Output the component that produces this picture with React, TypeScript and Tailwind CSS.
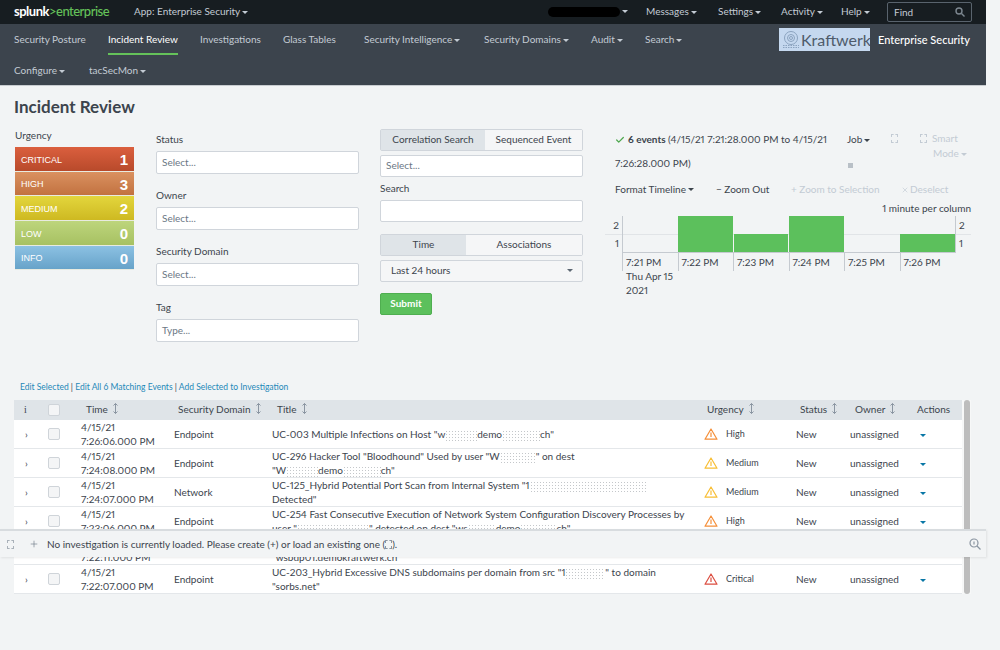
import { Check, Plus, X } from "lucide-react";

const topLinks = [
  { label: "Messages", className: "w-[72px]" },
  { label: "Settings", className: "w-[63px]" },
  { label: "Activity", className: "w-[60px]" },
  { label: "Help", className: "w-[46px]" },
];

const navLinks = [
  { label: "Security Posture", className: "w-[94px]" },
  { label: "Incident Review", className: "w-[92px]", active: true },
  { label: "Investigations", className: "w-[83px]" },
  { label: "Glass Tables", className: "w-[81px]" },
  { label: "Security Intelligence", caret: true, className: "w-[120px]" },
  { label: "Security Domains", caret: true, className: "w-[107px]" },
  { label: "Audit", caret: true, className: "w-[54px]" },
  { label: "Search", caret: true, className: "w-[60px]" },
];

const urgencies = [
  { label: "CRITICAL", count: 1, className: "bg-gradient-to-b from-[#db5f3e] to-[#b84a2b]" },
  { label: "HIGH", count: 3, className: "bg-gradient-to-b from-[#da9160] to-[#c27240]" },
  { label: "MEDIUM", count: 2, className: "bg-gradient-to-b from-[#e3d63c] to-[#ceb921]" },
  { label: "LOW", count: 0, className: "bg-gradient-to-b from-[#bdd57c] to-[#a7c162]" },
  { label: "INFO", count: 0, className: "bg-gradient-to-b from-[#8cc1e3] to-[#67a3c9]" },
];

const columns = "grid grid-cols-[26px_37px_93px_98px_432px_92px_54px_66px_50px]";

function Caret({ className = "border-t-[#c3cbd4]" }: { className?: string }) {
  return <span className={`inline-block ml-[2px] align-middle w-0 h-0 border-x-[3px] border-x-transparent border-t-[3.5px] ${className}`} />;
}

function Redacted({ className }: { className: string }) {
  return (
    <span
      className={`inline-block h-[11px] align-middle bg-[radial-gradient(#c4c7ca_0.8px,transparent_0.9px)] bg-[length:3px_3px] ${className}`}
    />
  );
}

function SortIcon() {
  return (
    <svg width="7" height="11" viewBox="0 0 7 11" className="inline-block ml-1 align-[-1px]" fill="none" stroke="#8a95a1" strokeWidth="1">
      <path d="M3.5 0.5V10.5M1.5 2.5L3.5 0.5L5.5 2.5M1.5 8.5L3.5 10.5L5.5 8.5" />
    </svg>
  );
}

function Alert({ color }: { color: string }) {
  return (
    <svg width="14" height="12" viewBox="0 0 14 12" fill="none" stroke={color} strokeWidth="1.2">
      <path d="M7 1L13 11.2H1L7 1Z" strokeLinejoin="round" />
      <path d="M7 4.5V9" />
    </svg>
  );
}

function Field({ label, placeholder }: { label: string; placeholder: string }) {
  return (
    <div className="h-[56px] pt-[4px]">
      <div className="h-[18px] leading-[12px]">{label}</div>
      <div className="h-[23px] w-[203px] bg-white border border-[#d0d5db] rounded-[2px] pl-[5px] leading-[21px] text-[#6b7785]">{placeholder}</div>
    </div>
  );
}

function Row({
  date,
  time,
  domain,
  title,
  urgency,
  color,
}: {
  date: string;
  time: string;
  domain: string;
  title: React.ReactNode;
  urgency: string;
  color: string;
}) {
  return (
    <div className={`${columns} h-[29px] pb-[1px] bg-white border-b border-[#e4e7ea] items-center leading-[14px]`}>
      <div className="pl-[11px] text-[#3c444d]">›</div>
      <div className="pl-[8px]">
        <div className="w-[12px] h-[12px] bg-[#f4f5f6] border border-[#cfd4d9] rounded-[2px]" />
      </div>
      <div className="pl-[4px]">
        <div>{date}</div>
        <div>{time}</div>
      </div>
      <div className="pl-[4px]">{domain}</div>
      <div className="pl-[4px] pr-[4px] whitespace-nowrap">{title}</div>
      <div className="pl-[4px] flex items-center">
        <Alert color={color} />
        <span className="ml-[8px] text-[9px]">{urgency}</span>
      </div>
      <div className="pl-[4px]">New</div>
      <div className="pl-[4px]">unassigned</div>
      <div className="pl-[6px]">
        <Caret className="border-t-[#0877a6]" />
      </div>
    </div>
  );
}

export default function App() {
  return (
    <div className="relative w-[1000px] h-[650px] overflow-hidden bg-[#f2f4f5] font-[Lato,sans-serif] text-[10px] proportional-nums text-[#3c444d]">
      {/* Top bar */}
      <div className="w-[986px] h-[24px] pb-[1px] bg-[#171d21] flex items-center text-[#c3cbd4]">
        <div className="ml-[14px] w-[120px] text-[13px] font-bold tracking-[-0.5px] text-white">
          splunk<span className="text-[#65c25a] font-medium">&gt;enterprise</span>
        </div>
        <div>
          App: Enterprise Security
          <Caret />
        </div>
        <div className="ml-auto flex items-center">
          <div className="w-[72px] h-[10px] bg-black rounded-full" />
          <Caret className="border-t-[#c3cbd4] mr-[18px]" />
          {topLinks.map((l) => (
            <div key={l.label} className={l.className}>
              {l.label}
              <Caret />
            </div>
          ))}
          <div className="w-[85px] h-[20px] mr-[14px] border border-[#59636d] rounded-[2px] pl-[6px] leading-[18px] flex justify-between pr-[6px]">
            Find
            <svg width="10" height="10" viewBox="0 0 10 10" fill="none" stroke="#7d8790" strokeWidth="1.4" className="mt-[4px]">
              <circle cx="4" cy="4" r="3" />
              <path d="M6.5 6.5L9.5 9.5" />
            </svg>
          </div>
        </div>
      </div>

      {/* App nav */}
      <div className="w-[986px] h-[62px] bg-[#3c444d] border-b border-[#c8ccd0] text-[#c3cbd4]">
        <div className="h-[38px] flex pl-[14px]">
          {navLinks.map((l) => (
            <div key={l.label} className={l.className}>
              <div
                className={`h-[31px] inline-block leading-[30px] border-b-2 ${
                  l.active ? "text-white border-[#65c25a]" : "border-transparent"
                }`}
              >
                {l.label}
                {l.caret && <Caret />}
              </div>
            </div>
          ))}
          <div className="ml-auto mr-[14px] flex items-start pt-[4px]">
            <div className="w-[91px] h-[23px] bg-[#c5d8ef] flex items-center overflow-hidden pl-[3px] text-[#4e5b6b] text-[16px] whitespace-nowrap">
              <svg width="18" height="19" viewBox="0 0 18 19" fill="none" stroke="#8ba3bf" strokeWidth="1" className="shrink-0">
                <circle cx="9" cy="8" r="6.5" />
                <circle cx="9" cy="8" r="3.5" />
                <circle cx="9" cy="8" r="1.5" />
                <path d="M1 15.5H17M1 17.5H17" strokeDasharray="1.5 1" />
              </svg>
              <span className="ml-[1px]">Kraftwerk</span>
            </div>
            <div className="ml-[8px] w-[94px] whitespace-nowrap h-[23px] leading-[23px] text-[11px] text-white font-medium">Enterprise Security</div>
          </div>
        </div>
        <div className="h-[23px] flex pl-[14px] leading-[16px]">
          <div className="w-[75px]">
            Configure
            <Caret />
          </div>
          <div>
            tacSecMon
            <Caret />
          </div>
        </div>
      </div>

      <h1 className="h-[43px] pl-[14px] leading-[41px] text-[17px] font-bold text-[#3c444d]">Incident Review</h1>

      {/* Filters */}
      <div className="h-[250px] flex">
        <div className="w-[156px] pl-[15px]">
          <div className="h-[18px] leading-[12px]">Urgency</div>
          <div className="w-[119px]">
            {urgencies.map((u) => (
              <div
                key={u.label}
                className={`h-[24.7px] flex items-center justify-between px-[6px] pt-[3px] border-b border-[#e8ebe0] ${u.className} text-white`}
              >
                <span className="font-['Liberation_Sans',sans-serif] text-[9px]">{u.label}</span>
                <span className="font-['Liberation_Sans',sans-serif] text-[15px] font-bold">{u.count}</span>
              </div>
            ))}
          </div>
        </div>

        <div className="w-[224px]">
          <Field label="Status" placeholder="Select..." />
          <Field label="Owner" placeholder="Select..." />
          <Field label="Security Domain" placeholder="Select..." />
          <Field label="Tag" placeholder="Type..." />
        </div>

        <div className="w-[235px]">
          <div className="w-[203px] h-[22px] flex border border-[#d0d5db] rounded-[2px] leading-[18px] text-center">
            <div className="w-[104px] bg-[#dfe4e8]">Correlation Search</div>
            <div className="flex-1 bg-[#f5f6f7]">Sequenced Event</div>
          </div>
          <div className="mt-[4px] w-[203px] h-[22px] bg-white border border-[#d0d5db] rounded-[2px] pl-[5px] leading-[19px] text-[#6b7785]">Select...</div>
          <div className="mt-[4px] h-[19px] leading-[14px]">Search</div>
          <div className="w-[203px] h-[22px] bg-white border border-[#d0d5db] rounded-[2px]" />
          <div className="mt-[12px] w-[203px] h-[22px] flex border border-[#d0d5db] rounded-[2px] leading-[18px] text-center">
            <div className="w-[85px] bg-[#dfe4e8]">Time</div>
            <div className="flex-1 bg-[#f5f6f7]">Associations</div>
          </div>
          <div className="mt-[4px] w-[203px] h-[22px] flex items-center justify-between bg-[#f5f6f7] border border-[#d0d5db] rounded-[2px] pl-[10px] pr-[9px] pb-[2px]">
            Last 24 hours
            <Caret className="border-t-[#5c6773]" />
          </div>
          <div className="mt-[11px] w-[52px] h-[22px] bg-[#5cc05c] border border-[#4fae50] rounded-[2px] text-center leading-[18px] font-bold text-white">Submit</div>
        </div>

        <div className="w-[385px] -ml-[10px]">
          <div className="h-[49px] flex pl-[10px]">
            <div className="w-[232px] leading-[23.5px] -mt-[1px]">
              <Check size={10} strokeWidth={3} className="inline-block text-[#4fa84f] mr-[3px]" />
              <b>6 events</b> (4/15/21 7:21:28.000 PM to 4/15/21
              <br />
              7:26:28.000 PM)
            </div>
            <div className="w-[44px] pt-[3px]">
              <div>
                Job
                <Caret className="border-t-[#3c444d]" />
              </div>
              <div className="mt-[16px] w-[5px] h-[5px] bg-[#b9c0c7] ml-[1px]" />
            </div>
            <div className="w-[29px] pt-[5px] text-[#c3cbd4]">
              <div className="w-[7px] h-[9px] border border-dashed border-[#c3cbd4]" />
            </div>
            <div className="text-[#c3cbd4] leading-[15px] pt-[2px]">
              <div>
                <span className="inline-block w-[7px] h-[9px] border border-dashed border-[#c3cbd4] mr-[5px] align-[-1px]" />
                Smart
              </div>
              <div className="pl-[13px]">
                Mode
                <Caret className="border-t-[#c3cbd4]" />
              </div>
            </div>
          </div>

          <div className="h-[20px] flex items-center pl-[10px] mt-[1px]">
            <div className="w-[101px]">
              Format Timeline
              <Caret className="border-t-[#3c444d]" />
            </div>
            <div className="w-[75px]">− Zoom Out</div>
            <div className="w-[110px] text-[#c3cbd4]">+ Zoom to Selection</div>
            <div className="text-[#c3cbd4]">
              <X size={8} strokeWidth={2} className="inline-block mr-[1px]" />
              Deselect
            </div>
          </div>

          <div className="h-[17px] pt-[2px] pr-[19px] text-right leading-[14px]">1 minute per column</div>

          {/* Timeline chart */}
          <div className="relative">
            <div className="absolute left-0 w-[366px] top-[18px] h-px bg-[#e1e4e7]" />
            <div className="relative flex h-[37px]">
              <div className="w-[17px] pr-[3px] text-right leading-[18px]">
                <div>2</div>
                <div>1</div>
              </div>
              <div className="w-[334px] flex items-end border-x border-b border-[#c5cad0]">
                <div className="w-[55.5px]" />
                <div className="w-[54.5px] h-[36px] mr-px bg-[#5cc05c]" />
                <div className="w-[54.5px] h-[18px] mr-px bg-[#5cc05c]" />
                <div className="w-[54.5px] h-[36px] mr-px bg-[#5cc05c]" />
                <div className="w-[55.5px]" />
                <div className="w-[55px] h-[18px] bg-[#5cc05c]" />
              </div>
              <div className="pl-[3px] leading-[18px]">
                <div>2</div>
                <div>1</div>
              </div>
            </div>
            <div className="ml-[17px] flex leading-[14px]">
              {["7:21 PM", "7:22 PM", "7:23 PM", "7:24 PM", "7:25 PM", "7:26 PM"].map((t, i) => (
                <div key={t} className="w-[55.5px] h-[18px] border-l border-[#c5cad0] pl-[3px] pt-[2px] box-border">
                  {t}
                  {i === 0 && (
                    <div className="whitespace-nowrap">
                      Thu Apr 15
                      <br />
                      2021
                    </div>
                  )}
                </div>
              ))}
            </div>
          </div>
        </div>
      </div>

      {/* Bulk actions */}
      <div className="h-[21px] pl-[20px] leading-[14px] pt-[1px] text-[8.5px] text-[#1e88b8]">
        Edit Selected <span className="text-[#3c444d]">|</span> Edit All 6 Matching Events <span className="text-[#3c444d]">|</span> Add Selected to Investigation
      </div>

      {/* Events table */}
      <div className="ml-[14px] flex w-[957px]">
        <div className="w-[948px]">
          <div className={`${columns} h-[20px] pb-[1px] bg-[#dfe4e8] items-center`}>
            <div className="pl-[10px] font-['Liberation_Serif',serif]">i</div>
            <div className="pl-[8px]">
              <div className="w-[12px] h-[12px] bg-[#f4f5f6] border border-[#cfd4d9] rounded-[2px]" />
            </div>
            <div className="pl-[9px]">
              Time
              <SortIcon />
            </div>
            <div className="pl-[8px]">
              Security Domain
              <SortIcon />
            </div>
            <div className="pl-[9px]">
              Title
              <SortIcon />
            </div>
            <div className="pl-[7px]">
              Urgency
              <SortIcon />
            </div>
            <div className="pl-[8px]">
              Status
              <SortIcon />
            </div>
            <div className="pl-[9px]">
              Owner
              <SortIcon />
            </div>
            <div className="pl-[5px]">Actions</div>
          </div>
          <Row
            date="4/15/21"
            time="7:26:06.000 PM"
            domain="Endpoint"
            urgency="High"
            color="#f58f39"
            title={
              <>
                UC-003 Multiple Infections on Host "w<Redacted className="w-[32px]" />
                demo
                <Redacted className="w-[38px]" />
                ch"
              </>
            }
          />
          <Row
            date="4/15/21"
            time="7:24:08.000 PM"
            domain="Endpoint"
            urgency="Medium"
            color="#f8be34"
            title={
              <>
                UC-296 Hacker Tool "Bloodhound" Used by user "W<Redacted className="w-[36px]" />" on dest
                <br />
                "W
                <Redacted className="w-[32px]" />
                demo
                <Redacted className="w-[38px]" />
                ch"
              </>
            }
          />
          <Row
            date="4/15/21"
            time="7:24:07.000 PM"
            domain="Network"
            urgency="Medium"
            color="#f8be34"
            title={
              <>
                UC-125_Hybrid Potential Port Scan from Internal System "1
                <Redacted className="w-[118px]" />
                <br />
                Detected"
              </>
            }
          />
          <Row
            date="4/15/21"
            time="7:23:06.000 PM"
            domain="Endpoint"
            urgency="High"
            color="#f58f39"
            title={
              <>
                UC-254 Fast Consecutive Execution of Network System Configuration Discovery Processes by
                <br />
                user "<Redacted className="w-[72px]" />" detected on dest "ws
                <Redacted className="w-[28px]" />
                demo
                <Redacted className="w-[36px]" />
                ch"
              </>
            }
          />
          <Row
            date="4/15/21"
            time="7:22:11.000 PM"
            domain="Endpoint"
            urgency="High"
            color="#f58f39"
            title={
              <>
                UC-254 Fast Consecutive Execution of Network System Configuration Discovery Processes on
                <br />
                "wsbdp01.demokraftwerk.ch"
              </>
            }
          />
          <Row
            date="4/15/21"
            time="7:22:07.000 PM"
            domain="Endpoint"
            urgency="Critical"
            color="#dc4e41"
            title={
              <>
                UC-203_Hybrid Excessive DNS subdomains per domain from src "1
                <Redacted className="w-[40px]" />" to domain
                <br />
                "sorbs.net"
              </>
            }
          />
        </div>
        <div className="w-[9px] bg-[#f7f8f8] pl-[2px] pr-[1px]">
          <div className="h-full bg-[#bdbdbd] rounded-full" />
        </div>
      </div>

      {/* Investigation bar */}
      <div className="absolute left-0 top-[529px] w-[986px] h-[28px] bg-[#f2f4f5] border-t-2 border-[#d8dcdf] shadow-[1px_1px_2px_rgba(0,0,0,0.08)] flex items-center">
        <div className="ml-[7px] w-[7px] h-[9px] border border-dashed border-[#a9b1b9]" />
        <Plus size={10} strokeWidth={1.5} className="ml-[15px] text-[#6b7785]" />
        <div className="ml-[8px]">
          No investigation is currently loaded. Please create (+) or load an existing one (
          <span className="inline-block w-[7px] h-[9px] border border-dashed border-[#8a95a1] align-[-1px]" />
          ).
        </div>
        <svg width="12" height="12" viewBox="0 0 12 12" fill="none" stroke="#8a95a1" strokeWidth="1.2" className="ml-auto mr-[5px]">
          <circle cx="5" cy="5" r="4" />
          <path d="M8 8L11.5 11.5" />
          <path d="M5 3.5V6.5" />
        </svg>
      </div>
    </div>
  );
}
